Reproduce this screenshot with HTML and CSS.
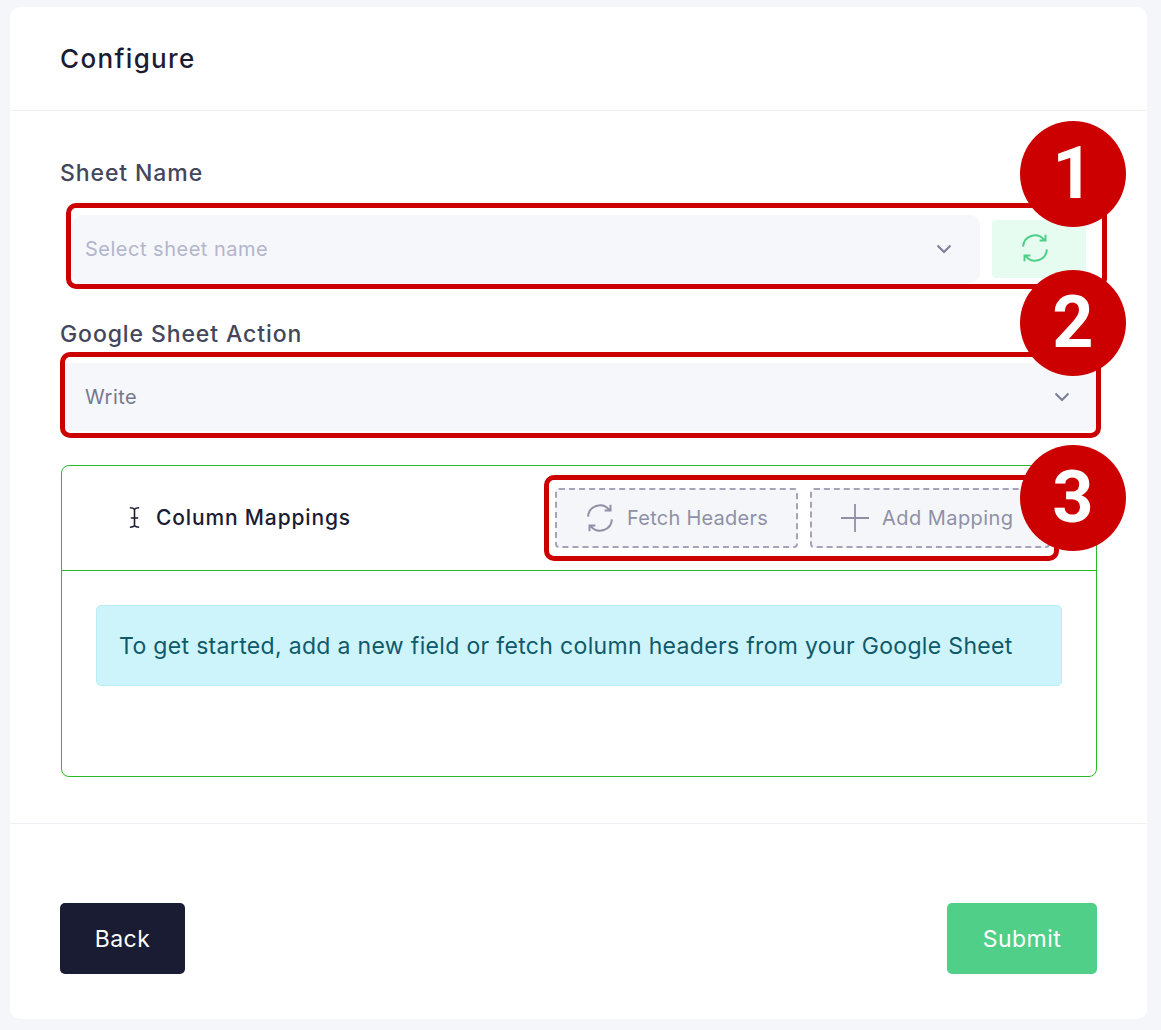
FILE: index.html
```html
<!DOCTYPE html>
<html lang="en">
<head>
    <meta charset="UTF-8">
    <meta name="viewport" content="width=device-width, initial-scale=1.0">
    <title>Configure</title>
    <link rel="stylesheet" href="styles.css">
</head>
<body>
    <div class="card">
        <div class="card-header">
            <h1>Configure</h1>
        </div>

        <div class="card-body">
            <label class="field-label">Sheet Name</label>
            <div class="sheet-row">
                <div class="select select-sheet">
                    <span class="placeholder">Select sheet name</span>
                    <svg class="chevron" viewBox="0 0 16 10"><path d="M1.500 1.500 8 8l6.500-6.500"/></svg>
                </div>
                <button class="refresh-btn">
                    <svg class="icon" viewBox="2.500 2 19 20"><path d="M3.500 11A8.500 8.500 0 0 1 18.500 6M19.500 2.500v4.200h-4.200M20.500 13A8.500 8.500 0 0 1 5.500 18M4.500 21.500v-4.200h4.200"/></svg>
                </button>
            </div>

            <label class="field-label field-label-action">Google Sheet Action</label>
            <div class="select select-action">
                <span class="value">Write</span>
                <svg class="chevron" viewBox="0 0 16 10"><path d="M1.500 1.500 8 8l6.500-6.500"/></svg>
            </div>

            <div class="mappings">
                <div class="mappings-head">
                    <div class="mappings-title">
                        <svg class="cursor-icon" viewBox="0 0 14 24"><path d="M2 1.500c2 0 4 .3 5 1.500 1-1.200 3-1.500 5-1.500M7 3v18M3 12.500h8M2 22.500c2 0 4-.3 5-1.500 1 1.200 3 1.500 5 1.500"/></svg>
                        <span>Column Mappings</span>
                    </div>
                    <div class="mappings-actions">
                        <button class="dashed-btn dashed-fetch">
                            <svg class="icon" viewBox="2.500 2 19 20"><path d="M3.500 11A8.500 8.500 0 0 1 18.500 6M19.500 2.500v4.200h-4.200M20.500 13A8.500 8.500 0 0 1 5.500 18M4.500 21.500v-4.200h4.200"/></svg>
                            Fetch Headers
                        </button>
                        <button class="dashed-btn dashed-add">
                            <svg class="icon" viewBox="1 1 22 22"><path d="M12 1v22M1 12h22"/></svg>
                            Add Mapping
                        </button>
                    </div>
                </div>
                <div class="mappings-body">
                    <div class="alert">To get started, add a new field or fetch column headers from your Google Sheet</div>
                </div>
            </div>
        </div>

        <div class="card-footer">
            <button class="btn btn-back">Back</button>
            <button class="btn btn-submit">Submit</button>
        </div>

        <!-- red callouts drawn over the form -->
        <div class="callout-box callout-box-1"></div>
        <div class="callout-box callout-box-2"></div>
        <div class="callout-box callout-box-3"></div>
        <div class="callout-num callout-num-1">1</div>
        <div class="callout-num callout-num-2">2</div>
        <div class="callout-num callout-num-3">3</div>
    </div>
</body>
</html>
```

FILE: styles.css
```css
* {
    box-sizing: border-box;
}
body {
    margin: 0;
    padding: 7px 14px 11px 10px;
    background-color: #f4f6fa;
    font-family: Inter, "Noto Sans", sans-serif;
}
.card {
    position: relative;
    height: 1012px;
    background-color: white;
    border-radius: 10px;
}
.card-header {
    height: 104px;
    padding: 0 50px;
    display: flex;
    align-items: center;
    border-bottom: 1px solid #eff1f5;
}
h1 {
    margin: 0;
    font-size: 26px;
    font-weight: 500;
    letter-spacing: 1.35px;
    color: #1a1c33;
}
.card-body {
    padding: 50px 50px 46px;
    border-bottom: 1px solid #eff1f5;
}
.field-label {
    display: block;
    line-height: 24px;
    font-size: 23px;
    font-weight: 500;
    letter-spacing: 0.9px;
    color: #44465c;
}
.field-label-action {
    margin-top: 39px;
}
.sheet-row {
    display: flex;
    align-items: center;
    gap: 12px;
    margin: 30px 11px 0 12px;
}
.select {
    display: flex;
    align-items: center;
    justify-content: space-between;
    height: 68px;
    background-color: #f5f7fa;
    border-radius: 10px;
    font-size: 20px;
    letter-spacing: 0.5px;
}
.select-sheet {
    flex: 1;
    padding: 0 28px 0 13px;
}
.select-action {
    margin-top: 17px;
    padding: 0 27px 0 25px;
}
.placeholder {
    color: #b2b5cc;
}
.value {
    color: #76788f;
}
.chevron {
    width: 16px;
    height: 10px;
    fill: none;
    stroke: #7c7e99;
    stroke-width: 2;
}
.refresh-btn {
    display: flex;
    align-items: center;
    justify-content: center;
    width: 94px;
    height: 58px;
    padding: 0 8px 2px 0;
    border: none;
    border-radius: 4px;
    background-color: #e6fcf0;
}
.icon {
    width: 28px;
    height: 28px;
    fill: none;
    stroke: currentColor;
    stroke-width: 1.400;
    flex-shrink: 0;
}
.refresh-btn .icon {
    color: #4fce88;
}
.mappings {
    height: 312px;
    margin-top: 34px;
    margin-left: 1px;
    border: 1px solid #2cb82c;
    border-radius: 8px;
}
.mappings-head {
    display: flex;
    align-items: center;
    justify-content: space-between;
    height: 105px;
    padding: 0 46px 0 66px;
    border-bottom: 1px solid #2cb82c;
}
.mappings-title {
    display: flex;
    align-items: center;
    gap: 15px;
    margin-bottom: 2px;
    font-size: 21px;
    font-weight: 500;
    letter-spacing: 0.85px;
    color: #1a1c33;
}
.cursor-icon {
    width: 13px;
    height: 23px;
    fill: none;
    stroke: #1a1c33;
    stroke-width: 1.700;
}
.mappings-actions {
    display: flex;
    gap: 12px;
}
.dashed-btn {
    display: flex;
    align-items: center;
    height: 60px;
    gap: 13px;
    background-color: #f5f6f9;
    border: 2px dashed #a3a4b8;
    border-radius: 4px;
    font-family: inherit;
    font-size: 20px;
    color: #8f90a6;
}
.dashed-fetch {
    width: 243px;
    padding: 0 0 0 29px;
    letter-spacing: 0.25px;
}
.dashed-add {
    width: 240px;
    padding: 0 0 0 29px;
    letter-spacing: 0.45px;
}
.mappings-body {
    padding: 34px 34px 0;
}
.alert {
    display: flex;
    align-items: center;
    height: 81px;
    padding: 0 22px;
    background-color: #cdf3fb;
    border: 1px solid #b9ecf7;
    border-radius: 5px;
    font-size: 23px;
    letter-spacing: 0.33px;
    color: #0e5a6b;
}
.card-footer {
    display: flex;
    justify-content: space-between;
    padding: 79px 50px 0;
}
.btn {
    height: 71px;
    border: none;
    border-radius: 5px;
    color: white;
    font-family: inherit;
    font-size: 23px;
    letter-spacing: 0.5px;
}
.btn-back {
    width: 125px;
    background-color: #191c33;
}
.btn-submit {
    width: 150px;
    background-color: #50cf89;
}
.callout-box {
    position: absolute;
    border: 5px solid #cc0000;
    border-radius: 10px;
}
.callout-box-1 {
    left: 56px;
    top: 196px;
    width: 1041px;
    height: 86px;
}
.callout-box-2 {
    left: 50px;
    top: 345px;
    width: 1041px;
    height: 86px;
}
.callout-box-3 {
    left: 534px;
    top: 468px;
    width: 515px;
    height: 86px;
}
.callout-num {
    position: absolute;
    left: 1010px;
    width: 106px;
    height: 106px;
    line-height: 106px;
    border-radius: 50%;
    background-color: #cc0000;
    color: white;
    text-align: center;
    font-family: Roboto, sans-serif;
    font-size: 72px;
    font-weight: 700;
}
.callout-num-1 {
    top: 114px;
}
.callout-num-2 {
    top: 263px;
}
.callout-num-3 {
    top: 438px;
}
```
